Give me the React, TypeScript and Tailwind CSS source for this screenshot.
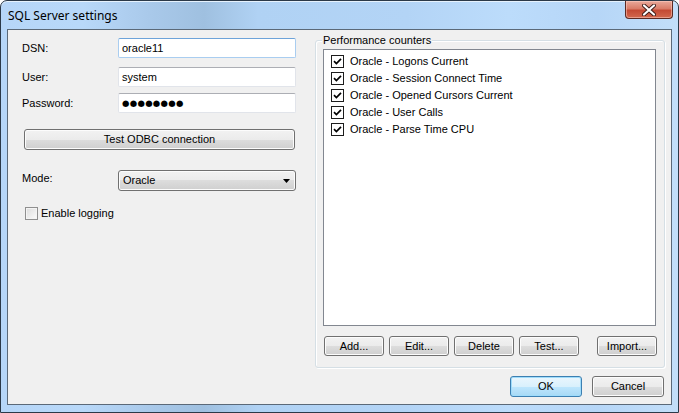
import React from 'react';

const FONT = { fontFamily: '"Liberation Sans", Arial, sans-serif' };

const counters = [
  'Oracle - Logons Current',
  'Oracle - Session Connect Time',
  'Oracle - Opened Cursors Current',
  'Oracle - User Calls',
  'Oracle - Parse Time CPU',
];

const btnClass =
  'flex items-center justify-center rounded-[3px] border border-[#707070] bg-[linear-gradient(#f2f2f2_0%,#ebebeb_50%,#dddddd_50%,#cfcfcf_100%)] shadow-[inset_0_0_0_1px_#fcfcfc] text-[11px] text-black';

function Button({ label, className = '' }: { label: string; className?: string }) {
  return <div className={`${btnClass} ${className}`}>{label}</div>;
}

function TextBox({ value, focused = false, password = false }: { value: string; focused?: boolean; password?: boolean }) {
  return (
    <div
      className={`flex h-[20px] w-[178px] items-center rounded-[2px] border bg-white px-[3px] text-[11px] ${
        focused ? 'border-[#a9cdf0] border-t-[#6da3d9]' : 'border-[#e1e4ea] border-t-[#acaeb4]'
      }`}
    >
      {password ? (
        <span className="tracking-[0.3px] text-[8.5px]" style={{ fontFamily: '"DejaVu Sans", sans-serif' }}>
          ●●●●●●●●
        </span>
      ) : (
        value
      )}
    </div>
  );
}

function CheckMark() {
  return (
    <svg width="9" height="9" viewBox="0 0 9 9">
      <path d="M1 4.2 L3.4 6.6 L8 1.8" fill="none" stroke="#000" strokeWidth="1.7" />
    </svg>
  );
}

export default function App() {
  return (
    <div
      className="flex h-[413px] w-[679px] flex-col rounded-t-[7px] border border-[#2b3948] bg-[linear-gradient(90deg,#b6d6f8_0%,#b8d8f9_12%,#a9c9ea_22%,#9fc0e0_30%,#b0d2f4_38%,#b3d4f6_60%,#bcdcfb_75%,#b6d6f7_88%,#c2def9_100%)] shadow-[inset_0_1px_0_#e6f2fd]"
      style={FONT}
    >
      {/* title bar */}
      <div className="flex h-[28px] shrink-0 items-start justify-between pl-[7px] pr-[5px]">
        <span className="mt-[6px] text-[12px] text-black" style={{ fontFamily: '"Noto Sans", sans-serif' }}>
          SQL Server settings
        </span>
        <div className="flex h-[18px] w-[48px] items-center justify-center rounded-b-[4px] border border-t-0 border-[#5c2a23] bg-[linear-gradient(#e9a99a_0%,#d97c68_45%,#c44a34_55%,#d2684e_100%)] shadow-[inset_0_0_0_1px_rgba(255,210,200,0.5)]">
          <svg width="14" height="12" viewBox="0 0 14 12">
            <path
              d="M2 1.5 L12 10.5 M12 1.5 L2 10.5"
              stroke="#3b1a16"
              strokeWidth="4"
              strokeLinecap="round"
            />
            <path d="M2 1.5 L12 10.5 M12 1.5 L2 10.5" stroke="#ffffff" strokeWidth="2.2" strokeLinecap="round" />
          </svg>
        </div>
      </div>

      {/* client area */}
      <div className="mx-[6px] mb-[7px] flex flex-1 flex-col border border-[#5b6978] bg-[#f0f0f0] text-[11px] text-black">
        <div className="flex pt-[8px]">
          {/* left column */}
          <div className="ml-[14px] flex w-[274px] flex-col">
            <div className="flex items-center">
              <span className="w-[96px]">DSN:</span>
              <TextBox value="oracle11" focused />
            </div>
            <div className="mt-[9px] flex items-center">
              <span className="w-[96px]">User:</span>
              <TextBox value="system" />
            </div>
            <div className="mt-[6px] flex items-center">
              <span className="w-[96px]">Password:</span>
              <TextBox value="" password />
            </div>
            <Button label="Test ODBC connection" className="ml-[2px] mt-[16px] h-[21px] w-[271px]" />
            <div className="mt-[20px] flex items-start">
              <span className="w-[96px]">Mode:</span>
              <div className={`${btnClass} h-[21px] w-[178px] justify-between! px-[4px]`}>
                <span>Oracle</span>
                <svg width="7" height="4" viewBox="0 0 7 4" className="mr-[1px]">
                  <path d="M0 0 H7 L3.5 4 Z" fill="#000" />
                </svg>
              </div>
            </div>
            <div className="mt-[14px] flex items-center">
              <div className="ml-[3px] h-[13px] w-[13px] border border-[#8f8f8f] bg-[linear-gradient(135deg,#dcdcdc,#fbfbfb)] shadow-[inset_0_0_0_1px_#f4f4f4]" />
              <span className="ml-[3px]">Enable logging</span>
            </div>
          </div>

          {/* performance counters group */}
          <div className="relative ml-[19px] mt-[2px] flex h-[328px] w-[350px] flex-col rounded-[3px] border border-[#d5dfe5] px-[7px] pt-[8px] shadow-[1px_1px_0_#ffffff,inset_1px_1px_0_#ffffff]">
            <span className="absolute left-[6px] top-[-8px] bg-[#f0f0f0] px-[1px] leading-[14px]">
              Performance counters
            </span>
            <div className="h-[277px] w-[333px] border border-[#828790] bg-white pt-[3px]">
              {counters.map((c) => (
                <div key={c} className="flex h-[17px] items-center pl-[7px]">
                  <div className="flex h-[13px] w-[13px] items-center justify-center border border-[#1c1c1c] bg-white">
                    <CheckMark />
                  </div>
                  <span className="ml-[6px]">{c}</span>
                </div>
              ))}
            </div>
            <div className="mt-[10px] flex items-center pl-[1px]">
              <Button label="Add..." className="h-[20px] w-[60px]" />
              <Button label="Edit..." className="ml-[5px] h-[20px] w-[60px]" />
              <Button label="Delete" className="ml-[5px] h-[20px] w-[60px]" />
              <Button label="Test..." className="ml-[5px] h-[20px] w-[60px]" />
              <Button label="Import..." className="ml-auto h-[20px] w-[60px]" />
            </div>
          </div>
        </div>

        {/* dialog buttons */}
        <div className="mr-[7px] mt-[8px] flex justify-end gap-[10px]">
          <div className="flex h-[21px] w-[72px] items-center justify-center rounded-[3px] border border-[#3c7fb1] bg-[linear-gradient(#eaf6fd_0%,#d9f0fc_50%,#bee6fd_50%,#a7d9f5_100%)] shadow-[inset_0_0_0_1px_#9fdcfb]">
            OK
          </div>
          <Button label="Cancel" className="h-[21px] w-[72px]" />
        </div>
      </div>
    </div>
  );
}
